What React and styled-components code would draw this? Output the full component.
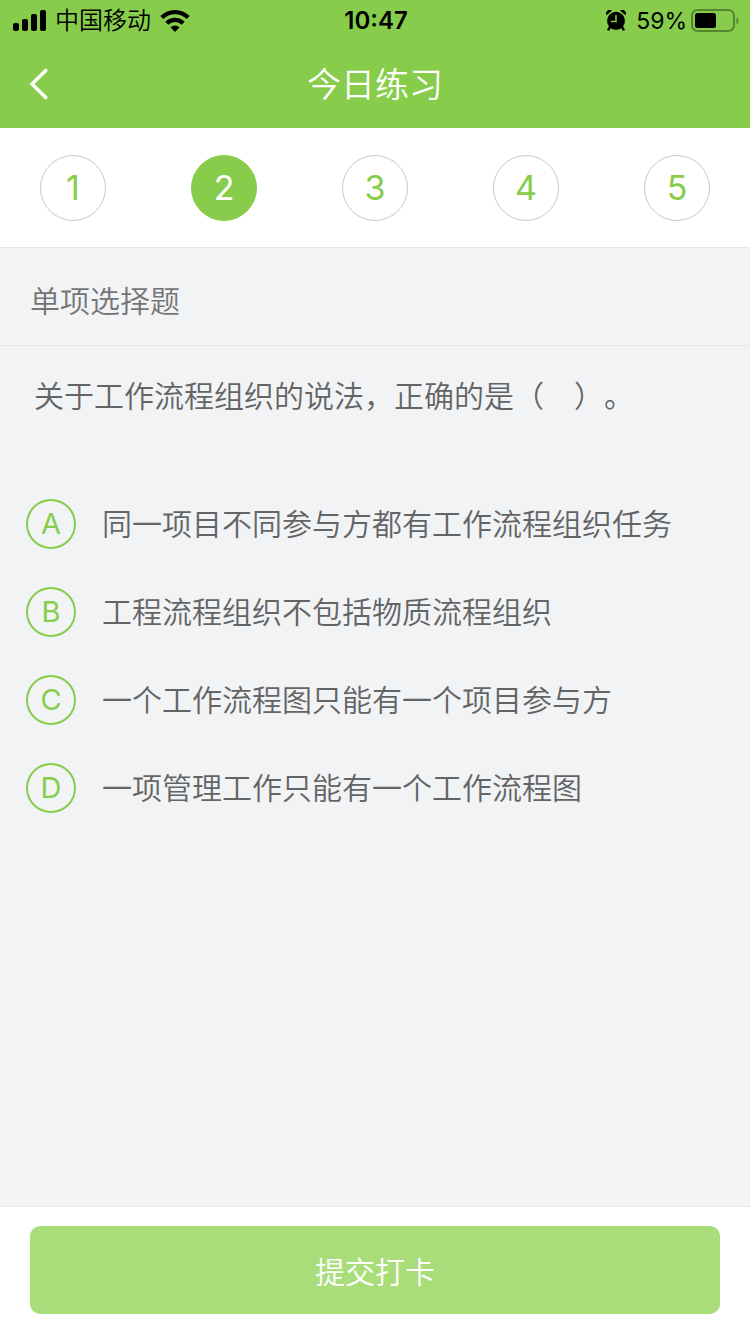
import { useState } from "react";
import styled, { createGlobalStyle } from "styled-components";

const green = "#87cd4b";
const paleGreen = "#a9dd7a";
const white = "#ffffff";
const grey = "#f2f3f5";
const line = "#e6e7e9";

const GlobalStyle = createGlobalStyle`
  * {
    box-sizing: border-box;
  }
  body {
    margin: 0;
    background: ${grey};
    font-family: Inter, "Noto Sans CJK SC", sans-serif;
    font-weight: 350;
    text-spacing-trim: space-all;
  }
  button {
    font: inherit;
    border: none;
    cursor: pointer;
  }
`;

const Page = styled.div`
  display: flex;
  flex-direction: column;
  min-height: 100vh;
`;
const Header = styled.header`
  background: ${green};
`;
const StatusBar = styled.div`
  display: grid;
  grid-template-columns: 1fr auto 1fr;
  align-items: center;
  height: 40px;
  padding: 0 11px 0 13px;
  font-size: 24px;
  line-height: 42px;
  color: #000;
  svg {
    display: block;
  }
`;
const StatusGroup = styled.div`
  display: flex;
  align-items: center;
  justify-content: ${({ $end }) => ($end ? "flex-end" : "flex-start")};
  gap: ${({ $end }) => ($end ? "4px" : "9px")};
`;
const Percent = styled.span`
  font-size: 23px;
  font-weight: 400;
  margin-left: 6px;
`;
const Time = styled.time`
  font-size: 24px;
  font-weight: 600;
`;
const NavBar = styled.nav`
  display: grid;
  grid-template-columns: 88px 1fr 88px;
  align-items: center;
  height: 88px;
`;
const Back = styled.button`
  display: flex;
  align-items: center;
  height: 88px;
  padding: 0 0 0 28px;
  background: none;
`;
const Title = styled.h1`
  margin: 0;
  padding-top: 2px;
  font-size: 34px;
  font-weight: 350;
  line-height: 48px;
  text-align: center;
  color: ${white};
`;
const Steps = styled.div`
  display: flex;
  justify-content: space-between;
  align-items: center;
  height: 120px;
  padding: 0 40px;
  background: ${white};
  border-bottom: 1px solid ${line};
`;
const Step = styled.button`
  width: 66px;
  height: 66px;
  padding: 0;
  border: 1px solid ${({ $active }) => ($active ? green : "#c8c8c8")};
  border-radius: 50%;
  background: ${({ $active }) => ($active ? green : white)};
  color: ${({ $active }) => ($active ? white : green)};
  font-size: 34px;
  font-weight: 400;
  line-height: 64px;
`;
const Kind = styled.h2`
  margin: 0;
  padding: 32px 30px 22px;
  border-bottom: 1px solid ${line};
  font-size: 30px;
  font-weight: 350;
  line-height: 43px;
  color: #747577;
`;
const Question = styled.fieldset`
  flex: 1;
  margin: 0;
  padding: 0;
  border: none;
  min-width: 0;
  color: #636466;
  font-size: 30px;
`;
const Stem = styled.legend`
  padding: 28px 34px;
  line-height: 44px;
`;
const Options = styled.div`
  display: flex;
  flex-direction: column;
  gap: 38px;
  padding: 53px 26px;
`;
const Option = styled.label`
  display: flex;
  align-items: center;
  gap: 26px;
  line-height: 50px;
  cursor: pointer;
`;
const Mark = styled.span`
  display: grid;
  place-items: center;
  flex-shrink: 0;
  color: ${green};
  font-size: 29px;
  font-weight: 400;
  > * {
    grid-area: 1 / 1;
  }
`;
const Radio = styled.input`
  appearance: none;
  width: 50px;
  height: 50px;
  margin: 0;
  border: 2px solid ${green};
  border-radius: 50%;
  cursor: pointer;
  &:checked {
    background: ${green};
  }
  &:checked + span {
    color: ${white};
  }
`;
const Footer = styled.footer`
  padding: 19px 30px 20px;
  background: ${white};
  border-top: 1px solid ${line};
`;
const Submit = styled.button`
  display: block;
  width: 100%;
  height: 88px;
  border-radius: 10px;
  background: ${paleGreen};
  color: ${white};
  font-size: 30px;
`;

const options = [
  { key: "A", text: "同一项目不同参与方都有工作流程组织任务" },
  { key: "B", text: "工程流程组织不包括物质流程组织" },
  { key: "C", text: "一个工作流程图只能有一个项目参与方" },
  { key: "D", text: "一项管理工作只能有一个工作流程图" },
];

const SignalIcon = () => (
  <svg width="33" height="22" viewBox="0 0 33 22">
    <rect x="0" y="13" width="6" height="8" rx="2" />
    <rect x="9" y="9" width="6" height="12" rx="2" />
    <rect x="18" y="4" width="6" height="17" rx="2" />
    <rect x="27" y="0" width="6" height="21" rx="2" />
  </svg>
);

const WifiIcon = () => (
  <svg width="30" height="22" viewBox="0 0 30 22">
    <g fill="none" stroke="#000" strokeWidth="4.2">
      <path d="M1.8 7.6a18.8 18.8 0 0 1 26.4 0" />
      <path d="M6.8 13.2a11.7 11.7 0 0 1 16.4 0" />
    </g>
    <path d="M15 22l-4.6-4.7a6.5 6.5 0 0 1 9.2 0z" />
  </svg>
);

const AlarmIcon = () => (
  <svg width="20" height="22" viewBox="0 0 20 22">
    <circle cx="10" cy="10.8" r="9" />
    <path d="M0.6 5.2A3.6 3.6 0 0 1 6 0.6zM19.4 5.2A3.6 3.6 0 0 0 14 0.6z" />
    <path d="M4 17l-1.6 2.6M16 17l1.6 2.6" stroke="#000" strokeWidth="2.4" strokeLinecap="round" />
    <path d="M10 5.4v6H5.4" fill="none" stroke={green} strokeWidth="1.5" strokeLinecap="round" />
  </svg>
);

const BatteryIcon = () => (
  <svg width="48" height="24" viewBox="0 0 48 24">
    <rect x="1" y="1" width="42" height="21" rx="5.5" fill="none" stroke="#55852d" strokeWidth="2" />
    <rect x="4" y="4" width="21" height="15" rx="2.5" />
    <path d="M45.5 8c2.6 1.4 2.6 6.4 0 7.8z" fill="#55852d" />
  </svg>
);

const App = () => {
  const [step, setStep] = useState(2);
  const [answer, setAnswer] = useState("");

  return (
    <Page lang="zh-CN">
      <GlobalStyle />
      <Header>
        <StatusBar>
          <StatusGroup>
            <SignalIcon />
            <span>中国移动</span>
            <WifiIcon />
          </StatusGroup>
          <Time>10:47</Time>
          <StatusGroup $end>
            <AlarmIcon />
            <Percent>59%</Percent>
            <BatteryIcon />
          </StatusGroup>
        </StatusBar>
        <NavBar>
          <Back aria-label="返回">
            <svg width="22" height="32" viewBox="0 0 22 32" fill="none" stroke={white} strokeWidth="3.4">
              <path d="M18.8 1.5L4 16l14.8 14.5" />
            </svg>
          </Back>
          <Title>今日练习</Title>
        </NavBar>
      </Header>
      <Steps>
        {[1, 2, 3, 4, 5].map((n) => (
          <Step key={n} $active={n === step} onClick={() => setStep(n)}>
            {n}
          </Step>
        ))}
      </Steps>
      <Kind>单项选择题</Kind>
      <Question>
        <Stem>关于工作流程组织的说法，正确的是（　）。</Stem>
        <Options>
          {options.map(({ key, text }) => (
            <Option key={key}>
              <Mark>
                <Radio
                  type="radio"
                  name="answer"
                  value={key}
                  checked={answer === key}
                  onChange={() => setAnswer(key)}
                />
                <span>{key}</span>
              </Mark>
              <span>{text}</span>
            </Option>
          ))}
        </Options>
      </Question>
      <Footer>
        <Submit>提交打卡</Submit>
      </Footer>
    </Page>
  );
};

export default App;
